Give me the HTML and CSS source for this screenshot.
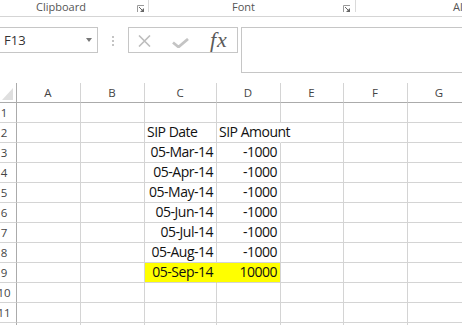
FILE: index.html
```html
<!DOCTYPE html>
<html lang="en">
<head>
    <meta charset="UTF-8">
    <title>SIP Dates - Excel</title>
    <link rel="stylesheet" href="styles.css">
</head>
<body>
    <!-- Ribbon group labels -->
    <div class="ribbon">
        <div class="group group-clipboard">
            <span class="group-label">Clipboard</span>
            <svg class="launcher" width="7" height="7" viewBox="0 0 7 7"><path d="M0.5 7V0.5H7" fill="none" stroke="#9a9a9a"/><path d="M2 2L5 5" stroke="#666"/><path d="M3 7H7V3Z" fill="#666"/></svg>
        </div>
        <div class="group group-font">
            <span class="group-label">Font</span>
            <svg class="launcher" width="7" height="7" viewBox="0 0 7 7"><path d="M0.5 7V0.5H7" fill="none" stroke="#9a9a9a"/><path d="M2 2L5 5" stroke="#666"/><path d="M3 7H7V3Z" fill="#666"/></svg>
        </div>
        <div class="group group-align">
            <span class="group-label">Al</span>
        </div>
    </div>

    <!-- Name box and formula bar -->
    <div class="formula-bar">
        <div class="name-box">
            <span>F13</span>
            <span class="name-arrow"></span>
        </div>
        <div class="grip"><i></i><i></i><i></i></div>
        <div class="fx-buttons">
            <svg class="btn-cancel" width="13" height="12" viewBox="0 0 13 12"><path d="M1 0.5L12 11.5M12 0.5L1 11.5" stroke="#bdbdbd" stroke-width="1.6"/></svg>
            <svg class="btn-enter" width="17" height="10" viewBox="0 0 17 10"><path d="M1 4.5L6.5 9L16 1" fill="none" stroke="#c4c4c4" stroke-width="2.8"/></svg>
            <span class="btn-fx">fx</span>
        </div>
        <div class="formula-input"></div>
    </div>

    <!-- Worksheet -->
    <div class="sheet">
        <div class="row head">
            <div class="corner"><span class="corner-mark"></span></div>
            <div>A</div><div>B</div><div>C</div><div>D</div><div>E</div><div>F</div><div>G</div>
        </div>
        <div class="row">
            <div class="rh"><span>1</span></div>
            <div></div><div></div><div></div><div></div><div></div><div></div><div></div>
        </div>
        <div class="row">
            <div class="rh"><span>2</span></div>
            <div></div><div></div><div>SIP Date</div><div class="spill">SIP Amount</div><div></div><div></div><div></div>
        </div>
        <div class="row">
            <div class="rh"><span>3</span></div>
            <div></div><div></div><div class="num">05-Mar-14</div><div class="num">-1000</div><div></div><div></div><div></div>
        </div>
        <div class="row">
            <div class="rh"><span>4</span></div>
            <div></div><div></div><div class="num">05-Apr-14</div><div class="num">-1000</div><div></div><div></div><div></div>
        </div>
        <div class="row">
            <div class="rh"><span>5</span></div>
            <div></div><div></div><div class="num">05-May-14</div><div class="num">-1000</div><div></div><div></div><div></div>
        </div>
        <div class="row">
            <div class="rh"><span>6</span></div>
            <div></div><div></div><div class="num">05-Jun-14</div><div class="num">-1000</div><div></div><div></div><div></div>
        </div>
        <div class="row">
            <div class="rh"><span>7</span></div>
            <div></div><div></div><div class="num">05-Jul-14</div><div class="num">-1000</div><div></div><div></div><div></div>
        </div>
        <div class="row">
            <div class="rh"><span>8</span></div>
            <div></div><div></div><div class="num">05-Aug-14</div><div class="num">-1000</div><div></div><div></div><div></div>
        </div>
        <div class="row">
            <div class="rh"><span>9</span></div>
            <div></div><div></div><div class="num fill joined">05-Sep-14</div><div class="num fill">10000</div><div></div><div></div><div></div>
        </div>
        <div class="row">
            <div class="rh"><span>10</span></div>
            <div></div><div></div><div></div><div></div><div></div><div></div><div></div>
        </div>
        <div class="row">
            <div class="rh"><span>11</span></div>
            <div></div><div></div><div></div><div></div><div></div><div></div><div></div>
        </div>
        <div class="row last">
            <div class="rh"></div>
            <div></div><div></div><div></div><div></div><div></div><div></div><div></div>
        </div>
    </div>
</body>
</html>
```

FILE: styles.css
```css
/* Global */
* {
    margin: 0;
    padding: 0;
    box-sizing: border-box;
}

body {
    width: 462px;
    height: 325px;
    overflow: hidden;
    background-color: #ffffff;
    font-family: "Open Sans", sans-serif;
    color: #000;
}

/* Ribbon group labels */
.ribbon {
    display: flex;
    height: 17px;
    border-bottom: 1px solid #d5d5d5;
}

.group {
    display: flex;
    align-items: flex-start;
    height: 12px;
    flex-shrink: 0;
}

.group-clipboard {
    width: 149px;
    padding: 0 4px 0 36px;
    border-right: 1px solid #dadada;
}

.group-font {
    width: 207px;
    padding: 0 5px 0 83px;
    border-right: 1px solid #dadada;
}

.group-align {
    padding-left: 97px;
}

.group-label {
    font-size: 11px;
    line-height: 14px;
    color: #555;
    white-space: nowrap;
}

.launcher {
    margin-left: auto;
    margin-top: 5px;
}

/* Formula bar */
.formula-bar {
    display: flex;
    align-items: flex-start;
    height: 66px;
    padding-top: 10px;
}

.name-box {
    display: flex;
    align-items: center;
    flex-shrink: 0;
    width: 99px;
    height: 26px;
    margin-left: -1px;
    padding: 0 5px 0 4px;
    border: 1px solid #c6c6c6;
    font-size: 13px;
    color: #333;
}

.name-arrow {
    margin-left: auto;
    border-left: 3.5px solid transparent;
    border-right: 3.5px solid transparent;
    border-top: 4px solid #777;
}

.grip {
    display: flex;
    flex-direction: column;
    gap: 2px;
    margin-left: 14px;
    padding-top: 9px;
}

.grip i {
    width: 2px;
    height: 2px;
    background-color: #c4c4c4;
}

.fx-buttons {
    display: flex;
    align-items: flex-start;
    flex-shrink: 0;
    width: 110px;
    height: 26px;
    margin-left: 14px;
    border: 1px solid #c6c6c6;
}

.btn-cancel {
    margin: 7px 0 0 9px;
}

.btn-enter {
    margin: 10px 0 0 21px;
}

.btn-fx {
    margin: 1px 0 0 21px;
    font-family: "Liberation Serif", serif;
    font-style: italic;
    font-size: 22px;
    line-height: 22px;
    letter-spacing: 1px;
    color: #5a5a5a;
}

.formula-input {
    flex: 1;
    height: 46px;
    margin: 0 -5px 0 3px;
    border: 1px solid #c6c6c6;
}

/* Worksheet */
.row {
    display: grid;
    grid-template-columns: 17px 64px 64px 72px 64px 63px 64px 64px;
    height: 20px;
}

.row > div {
    border-right: 1px solid #d4d4d4;
    border-bottom: 1px solid #d4d4d4;
    padding: 0 3px 0 2px;
    font-size: 14px;
    letter-spacing: -0.5px;
    line-height: 18px;
    white-space: nowrap;
    color: #111;
}

.head > div {
    border-bottom-color: #ababab;
    text-align: center;
    font-size: 11.5px;
    letter-spacing: 0;
    line-height: 19px;
    color: #444;
}

.head .corner {
    display: flex;
    justify-content: flex-end;
    align-items: flex-end;
    padding: 0 3px 2px 0;
    border-right-color: #ababab;
}

.corner-mark {
    border-left: 11px solid transparent;
    border-bottom: 12px solid #dfdfdf;
}

.row > .rh {
    display: flex;
    justify-content: center;
    padding: 0 8px 0 0;
    border-right-color: #ababab;
    font-size: 11.5px;
    letter-spacing: 0;
    line-height: 19px;
    color: #444;
}

.num {
    text-align: right;
}

.spill {
    border-right-color: #ffffff !important;
}

.fill {
    background-color: #ffff00;
}

.joined {
    border-right-color: #ffff00 !important;
}
```
